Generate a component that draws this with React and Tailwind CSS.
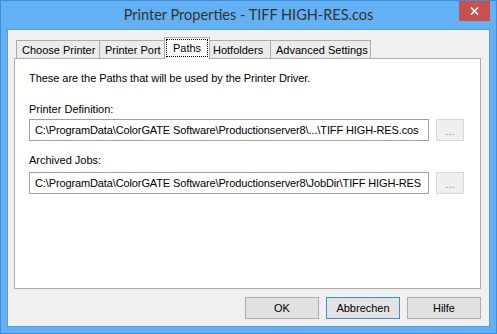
export default function App() {
  const font = { fontFamily: "'Liberation Sans', Arial, sans-serif" };
  const titleFont = { fontFamily: "Lato, 'Liberation Sans', sans-serif" };
  return (
    <div className="w-[497px] h-[334px] bg-[#64b0f4] border border-[#3f8fd5] flex flex-col text-black" style={font}>
      <div className="h-[28px] grid grid-cols-[1fr_auto_1fr] shrink-0">
        <div />
        <div className="text-[14.5px] leading-[28px] text-[#333333]" style={titleFont}>Printer Properties - TIFF HIGH-RES.cos</div>
        <div className="flex justify-end items-start pr-[6px]">
          <div className="w-[31px] h-[20px] bg-[#c75050] flex items-center justify-center">
            <svg width="9" height="8" viewBox="0 0 9 8">
              <path d="M1 0.5 L8 7.5 M8 0.5 L1 7.5" stroke="white" strokeWidth="1.6" />
            </svg>
          </div>
        </div>
      </div>
      <div className="mx-[6px] mb-[6px] flex-1 border border-[#5a9fdb] bg-[#f0f0f0] flex flex-col pt-[7px] pl-[6px] pr-[8px] text-[11px]">
        <div className="h-[21px] flex items-end pl-[2px]">
          <div className="w-[83px] h-[18px] border-l border-t border-[#acacac] bg-[#ececec] pl-[5px] leading-[18px] whitespace-nowrap">Choose Printer</div>
          <div className="w-[65px] h-[18px] border-l border-t border-[#acacac] bg-[#ececec] pl-[5px] leading-[18px] whitespace-nowrap">Printer Port</div>
          <div className="w-[46px] h-[22px] border-l border-r border-t border-[#acacac] bg-white relative z-10 -mb-px pt-[1px] px-[1px] pb-[2px]">
            <div className="h-full border border-dotted border-black flex items-center justify-center leading-none">Paths</div>
          </div>
          <div className="w-[60px] h-[18px] border-t border-[#acacac] bg-[#ececec] pl-[3px] leading-[18px] whitespace-nowrap">Hotfolders</div>
          <div className="w-[101px] h-[18px] border-l border-r border-t border-[#acacac] bg-[#ececec] pl-[5px] leading-[18px] whitespace-nowrap">Advanced Settings</div>
        </div>
        <div className="h-[231px] border border-[#acacac] bg-white flex flex-col pl-[14px] pt-[11px]">
          <div className="leading-[16px] tracking-[-0.05px]">These are the Paths that will be used by the Printer Driver.</div>
          <div className="leading-[16px] mt-[15px]">Printer Definition:</div>
          <div className="flex items-start mt-[2px] gap-[7px]">
            <div className="w-[400px] h-[22px] border border-[#a0a0a0] bg-white pl-[5px] leading-[20px] whitespace-nowrap overflow-hidden tracking-[-0.12px]">C:\ProgramData\ColorGATE Software\Productionserver8\...\TIFF HIGH-RES.cos</div>
            <div className="w-[28px] h-[22px] border border-[#d9d9d9] bg-[#efefef] text-[#8f8f9f] flex items-center justify-center leading-none pt-[3px]">...</div>
          </div>
          <div className="leading-[16px] mt-[11px]">Archived Jobs:</div>
          <div className="flex items-start mt-[4px] gap-[7px]">
            <div className="w-[400px] h-[22px] border border-[#a0a0a0] bg-white pl-[5px] leading-[20px] whitespace-nowrap overflow-hidden tracking-[-0.12px]">C:\ProgramData\ColorGATE Software\Productionserver8\JobDir\TIFF HIGH-RES</div>
            <div className="w-[28px] h-[22px] border border-[#d9d9d9] bg-[#efefef] text-[#8f8f9f] flex items-center justify-center leading-none pt-[3px]">...</div>
          </div>
        </div>
        <div className="mt-[8px] flex justify-end gap-[7px]">
          <div className="w-[74px] h-[22px] border border-[#adadad] bg-[#e1e1e1] flex items-center justify-center">OK</div>
          <div className="w-[74px] h-[22px] border border-[#3c8fe0] bg-[#e3e3e3] flex items-center justify-center">Abbrechen</div>
          <div className="w-[74px] h-[22px] border border-[#adadad] bg-[#e1e1e1] flex items-center justify-center">Hilfe</div>
        </div>
      </div>
    </div>
  );
}
